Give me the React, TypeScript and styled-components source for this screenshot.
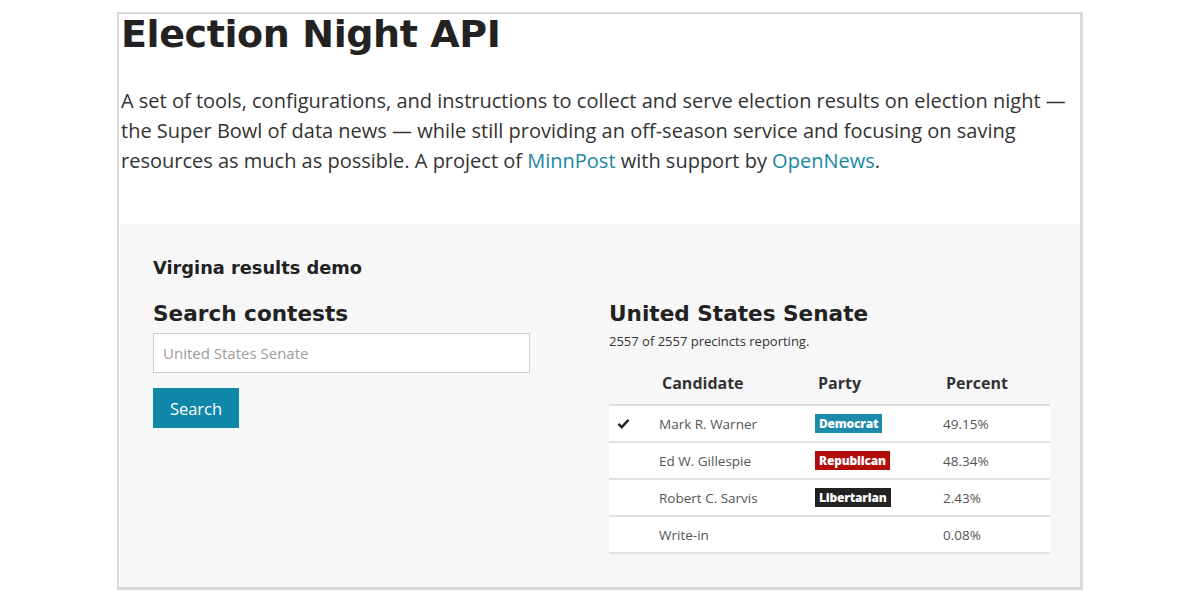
import React from "react";
import styled, { createGlobalStyle } from "styled-components";

const Global = createGlobalStyle`
  html, body { margin: 0; padding: 0; background: #ffffff; }
  body { font-family: "Open Sans", "Liberation Sans", sans-serif; color: #333; }
  * { box-sizing: border-box; }
`;

const Frame = styled.div`
  width: 966px;
  height: 578px;
  margin: 12px auto 0;
  border: 2px solid #dcd7de;
  border-right-width: 3px;
  border-bottom-width: 3px;
  display: flex;
  flex-direction: column;
  overflow: hidden;
`;

const Intro = styled.header`
  padding: 0 0 0 2px;
  height: 210px;
`;

const Title = styled.h1`
  margin: 0;
  padding-top: 0;
  font-family: "DejaVu Sans", "Liberation Sans", sans-serif;
  font-weight: 700;
  font-size: 38px;
  line-height: 41px;
  letter-spacing: -0.4px;
  color: #222;
`;

const Lead = styled.p`
  margin: 31px 0 0;
  font-size: 20px;
  line-height: 30px;
  color: #333;
  letter-spacing: 0;
`;

const Link = styled.a`
  color: #1a87a6;
  text-decoration: none;
`;

const Demo = styled.section`
  flex: 1;
  background: #f7f7f7;
  margin-left: 1px;
  padding: 33px 0 0 33px;
`;

const DemoTitle = styled.h3`
  margin: 0;
  font-family: "DejaVu Sans", "Liberation Sans", sans-serif;
  font-weight: 700;
  font-size: 17.8px;
  line-height: 22px;
  color: #222;
`;

const Columns = styled.div`
  display: grid;
  grid-template-columns: 456px 441px;
  margin-top: 21px;
`;

const Col = styled.div`
  display: flex;
  flex-direction: column;
  align-items: flex-start;
`;

const SectionTitle = styled.h2`
  margin: 0;
  font-family: "DejaVu Sans", "Liberation Sans", sans-serif;
  font-weight: 700;
  font-size: 21.6px;
  line-height: 28px;
  color: #222;
`;

const Input = styled.input`
  margin-top: 5px;
  width: 377px;
  height: 40px;
  border: 1px solid #cfcfcf;
  background: #fff;
  padding: 0 9px;
  font-family: "Open Sans", "Liberation Sans", sans-serif;
  font-size: 15px;
  color: #333;
  outline: none;
  &::placeholder { color: #9d9d9d; }
`;

const Button = styled.button`
  margin-top: 15px;
  width: 86px;
  height: 40px;
  border: none;
  background: #0f87a9;
  color: #fff;
  font-family: "Open Sans", "Liberation Sans", sans-serif;
  font-size: 16.5px;
  padding: 0;
`;

const Meta = styled.p`
  margin: 4px 0 0;
  font-size: 13px;
  line-height: 18px;
  color: #333;
`;

const Table = styled.table`
  margin-top: 16px;
  width: 441px;
  border-collapse: collapse;
`;

const Th = styled.th<{ $w?: number }>`
  text-align: left;
  font-size: 16px;
  font-weight: 700;
  color: #333;
  height: 39px;
  padding: 0 0 4px 3px;
  vertical-align: middle;
  width: ${(p) => (p.$w ? `${p.$w}px` : "auto")};
  border-bottom: 2px solid #dddddd;
`;

const Tr = styled.tr`
  background: #fff;
  border-bottom: 2px solid #e2e2e2;
`;

const Td = styled.td`
  height: 37px;
  padding: 0;
  font-size: 13.5px;
  color: #555;
  vertical-align: middle;
`;

const CheckCell = styled(Td)`
  padding-left: 8px;
  color: #222;
`;

const Badge = styled.span<{ $bg: string }>`
  display: inline-block;
  background: ${(p) => p.$bg};
  color: #fff;
  font-family: "Open Sans", "Liberation Sans", sans-serif;
  font-weight: 800;
  font-size: 12px;
  line-height: 19px;
  padding: 0 4px;
  letter-spacing: -0.2px;
`;

const Check = () => (
  <svg width="13" height="11" viewBox="0 0 14 12" aria-hidden="true">
    <path d="M1.5 6.5 L5 10 L12.5 2" fill="none" stroke="#222" strokeWidth="2.6" strokeLinejoin="miter" />
  </svg>
);

const rows = [
  { win: true, name: "Mark R. Warner", party: "Democrat", color: "#1b8aab", pct: "49.15%" },
  { win: false, name: "Ed W. Gillespie", party: "Republican", color: "#b30a0a", pct: "48.34%" },
  { win: false, name: "Robert C. Sarvis", party: "Libertarian", color: "#222222", pct: "2.43%" },
  { win: false, name: "Write-in", party: "", color: "", pct: "0.08%" },
];

export default function App() {
  return (
    <>
      <Global />
      <Frame>
        <Intro>
          <Title>Election Night API</Title>
          <Lead>
            A set of tools, configurations, and instructions to collect and serve election results on election night —
            the Super Bowl of data news — while still providing an off-season service and focusing on saving
            resources as much as possible. A project of <Link href="#">MinnPost</Link> with support by{" "}
            <Link href="#">OpenNews</Link>.
          </Lead>
        </Intro>
        <Demo>
          <DemoTitle>Virgina results demo</DemoTitle>
          <Columns>
            <Col>
              <SectionTitle>Search contests</SectionTitle>
              <Input placeholder="United States Senate" />
              <Button>Search</Button>
            </Col>
            <Col>
              <SectionTitle>United States Senate</SectionTitle>
              <Meta>2557 of 2557 precincts reporting.</Meta>
              <Table>
                <thead>
                  <tr>
                    <Th $w={50} />
                    <Th $w={156}>Candidate</Th>
                    <Th $w={128}>Party</Th>
                    <Th>Percent</Th>
                  </tr>
                </thead>
                <tbody>
                  {rows.map((r) => (
                    <Tr key={r.name}>
                      <CheckCell>{r.win ? <Check /> : null}</CheckCell>
                      <Td>{r.name}</Td>
                      <Td>{r.party ? <Badge $bg={r.color}>{r.party}</Badge> : null}</Td>
                      <Td>{r.pct}</Td>
                    </Tr>
                  ))}
                </tbody>
              </Table>
            </Col>
          </Columns>
        </Demo>
      </Frame>
    </>
  );
}
